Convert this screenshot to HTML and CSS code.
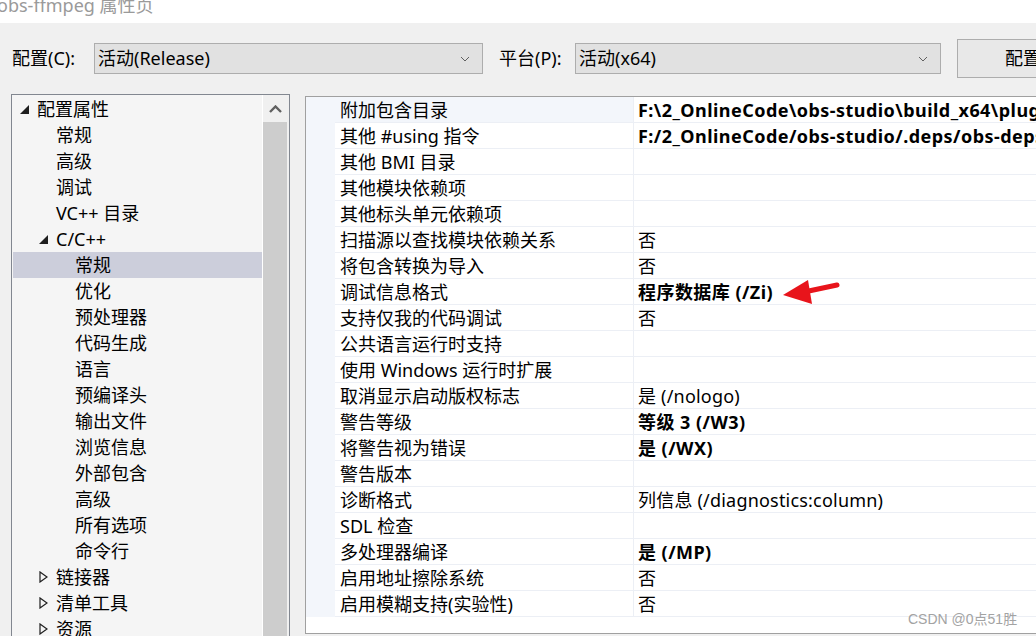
FILE: index.html
```html
<!DOCTYPE html>
<html lang="zh-CN">
<head>
<meta charset="utf-8">
<title>obs-ffmpeg 属性页</title>
<link rel="stylesheet" href="styles.css">
</head>
<body>
<div class="window">
  <div class="title">obs-ffmpeg 属性页</div>
  <div class="toolbar">
    <div class="lbl lbl-config">配置(C):</div>
    <div class="select sel-config"><span>活动(Release)</span><svg class="chev" width="10" height="6" viewBox="0 0 10 6"><polyline points="1,1 5,5 9,1" fill="none" stroke="#606060" stroke-width="1"/></svg></div>
    <div class="lbl lbl-platform">平台(P):</div>
    <div class="select sel-platform"><span>活动(x64)</span><svg class="chev" width="10" height="6" viewBox="0 0 10 6"><polyline points="1,1 5,5 9,1" fill="none" stroke="#606060" stroke-width="1"/></svg></div>
    <div class="btn">配置管理器(O)...</div>
  </div>
  <div class="main">
    <div class="tree">
      <div class="tree-list">
        <div class="node l1"><span class="tri"><svg width="9" height="9" viewBox="0 0 9 9"><polygon points="9,0 9,9 0,9" fill="#1e1e1e"/></svg></span>配置属性</div>
        <div class="node l2">常规</div>
        <div class="node l2">高级</div>
        <div class="node l2">调试</div>
        <div class="node l2">VC++ 目录</div>
        <div class="node l2t"><span class="tri"><svg width="9" height="9" viewBox="0 0 9 9"><polygon points="9,0 9,9 0,9" fill="#1e1e1e"/></svg></span>C/C++</div>
        <div class="node l3 selected">常规</div>
        <div class="node l3">优化</div>
        <div class="node l3">预处理器</div>
        <div class="node l3">代码生成</div>
        <div class="node l3">语言</div>
        <div class="node l3">预编译头</div>
        <div class="node l3">输出文件</div>
        <div class="node l3">浏览信息</div>
        <div class="node l3">外部包含</div>
        <div class="node l3">高级</div>
        <div class="node l3">所有选项</div>
        <div class="node l3">命令行</div>
        <div class="node l2t"><span class="tri"><svg width="9" height="12" viewBox="0 0 9 12"><polygon points="1,1 8,6 1,11" fill="none" stroke="#1e1e1e" stroke-width="1.2"/></svg></span>链接器</div>
        <div class="node l2t"><span class="tri"><svg width="9" height="12" viewBox="0 0 9 12"><polygon points="1,1 8,6 1,11" fill="none" stroke="#1e1e1e" stroke-width="1.2"/></svg></span>清单工具</div>
        <div class="node l2t"><span class="tri"><svg width="9" height="12" viewBox="0 0 9 12"><polygon points="1,1 8,6 1,11" fill="none" stroke="#1e1e1e" stroke-width="1.2"/></svg></span>资源</div>
      </div>
      <div class="vscroll">
        <div class="up"><svg width="13" height="8" viewBox="0 0 13 8"><polyline points="1,7 6.5,1.5 12,7" fill="none" stroke="#606060" stroke-width="2.4"/></svg></div>
        <div class="thumb"></div>
      </div>
    </div>
    <div class="grid">
      <div class="rows">
        <div class="row first"><div class="name">附加包含目录</div><div class="val bold">F:\2_OnlineCode\obs-studio\build_x64\plugins\obs-ffmpeg</div></div>
        <div class="row"><div class="name">其他 #using 指令</div><div class="val bold">F:/2_OnlineCode/obs-studio/.deps/obs-deps-2023</div></div>
        <div class="row"><div class="name">其他 BMI 目录</div><div class="val"></div></div>
        <div class="row"><div class="name">其他模块依赖项</div><div class="val"></div></div>
        <div class="row"><div class="name">其他标头单元依赖项</div><div class="val"></div></div>
        <div class="row"><div class="name">扫描源以查找模块依赖关系</div><div class="val">否</div></div>
        <div class="row"><div class="name">将包含转换为导入</div><div class="val">否</div></div>
        <div class="row"><div class="name">调试信息格式</div><div class="val bold">程序数据库 (/Zi)</div></div>
        <div class="row"><div class="name">支持仅我的代码调试</div><div class="val">否</div></div>
        <div class="row"><div class="name">公共语言运行时支持</div><div class="val"></div></div>
        <div class="row"><div class="name">使用 Windows 运行时扩展</div><div class="val"></div></div>
        <div class="row"><div class="name">取消显示启动版权标志</div><div class="val">是 (/nologo)</div></div>
        <div class="row"><div class="name">警告等级</div><div class="val bold">等级 3 (/W3)</div></div>
        <div class="row"><div class="name">将警告视为错误</div><div class="val bold">是 (/WX)</div></div>
        <div class="row"><div class="name">警告版本</div><div class="val"></div></div>
        <div class="row"><div class="name">诊断格式</div><div class="val">列信息 (/diagnostics:column)</div></div>
        <div class="row"><div class="name">SDL 检查</div><div class="val"></div></div>
        <div class="row"><div class="name">多处理器编译</div><div class="val bold">是 (/MP)</div></div>
        <div class="row"><div class="name">启用地址擦除系统</div><div class="val">否</div></div>
        <div class="row"><div class="name">启用模糊支持(实验性)</div><div class="val">否</div></div>
      </div>
    </div>
  </div>
  <svg class="arrow" width="64" height="32" viewBox="0 0 64 32">
    <line x1="24" y1="16" x2="57" y2="9" stroke="#e8141b" stroke-width="5" stroke-linecap="round"/>
    <polygon points="3,19 28,4 32,28" fill="#e8141b"/>
  </svg>
  <div class="watermark">CSDN @0点51胜</div>
</div>
</body>
</html>
```

FILE: styles.css
```css
html, body {
  margin: 0;
  padding: 0;
}
body {
  width: 1036px;
  height: 636px;
  overflow: hidden;
  background: #f0f0f0;
  font-family: "Noto Sans", "Noto Sans CJK SC", sans-serif;
  font-size: 18px;
  color: #000;
}
.window {
  position: relative;
  width: 1036px;
  height: 636px;
  overflow: hidden;
}
.title {
  height: 23px;
  background: #fff;
  color: #9a9a9a;
  line-height: 10px;
  margin-left: -3px;
  white-space: nowrap;
}
.toolbar {
  display: flex;
  align-items: flex-start;
  padding: 20px 0 0 12px;
  height: 51px;
  white-space: nowrap;
}
.lbl {
  height: 31px;
  line-height: 31px;
  flex: none;
}
.lbl-config { width: 82px; }
.lbl-platform { width: 76px; margin-left: 16px; }
.select {
  box-sizing: border-box;
  height: 31px;
  border: 1px solid #adadad;
  background: #e1e1e1;
  display: flex;
  align-items: center;
  justify-content: space-between;
  padding: 0 12px 0 3px;
  flex: none;
}
.select span { line-height: 29px; }
.sel-config { width: 389px; }
.sel-platform { width: 366px; }
.chev { display: block; }
.btn {
  box-sizing: border-box;
  margin-left: 16px;
  margin-top: -4px;
  height: 39px;
  line-height: 37px;
  border: 1px solid #adadad;
  background: #e8e8e8;
  padding-left: 47px;
  width: 200px;
  flex: none;
}
.main {
  display: flex;
  align-items: flex-start;
  margin: 0 0 0 11px;
}
.tree {
  flex: none;
  display: flex;
  width: 279px;
  height: 560px;
  box-sizing: border-box;
  border: 1px solid #828790;
  background: #f5f5f5;
}
.tree-list {
  width: 250px;
  padding-top: 1px;
  border-right: 1px solid #fff;
  flex: none;
}
.node {
  height: 26px;
  line-height: 26px;
  display: flex;
  align-items: center;
  white-space: nowrap;
}
.tri {
  width: 17px;
  flex: none;
  display: flex;
  align-items: center;
}
.tri svg { display: block; }
.l1 { padding-left: 8px; }
.l2 { padding-left: 44px; }
.l2t { padding-left: 27px; }
.l3 { padding-left: 63px; }
.selected {
  background: #cccedb;
  margin-left: 1px;
  padding-left: 62px;
}
.vscroll {
  flex: 1;
  background: #f0f0f0;
  display: flex;
  flex-direction: column;
}
.up {
  height: 27px;
  display: flex;
  align-items: center;
  justify-content: center;
  padding-right: 2px;
}
.up svg { display: block; }
.thumb {
  width: 24px;
  flex: 1;
  background: #cdcdcd;
}
.grid {
  flex: none;
  margin: 2px 0 0 15px;
  width: 760px;
  height: 538px;
  box-sizing: border-box;
  border: 1px solid #a0a0a0;
  border-right: none;
  background: #fff;
}
.rows {
  background: linear-gradient(to right, #f3f6fb 29px, #fff 29px);
}
.row {
  display: flex;
  height: 26px;
  box-sizing: border-box;
  border-bottom: 1px solid #eceff5;
  margin-left: 29px;
  background: #fff;
  white-space: nowrap;
}
.row .name {
  width: 299px;
  flex: none;
  box-sizing: border-box;
  padding: 1px 0 0 5px;
  border-right: 1px solid #eceff5;
  line-height: 25px;
  overflow: hidden;
}
.row.first .name { background: #f3f6fb; }
.row .val {
  padding: 1px 0 0 4px;
  line-height: 25px;
  letter-spacing: 0.2px;
}
.row .val.bold {
  font-weight: 700;
  letter-spacing: 0.45px;
}
.arrow {
  position: absolute;
  left: 780px;
  top: 276px;
}
.watermark {
  position: absolute;
  left: 908px;
  top: 609px;
  font-size: 14px;
  line-height: 20px;
  color: #a3a3a3;
  font-family: "Liberation Sans", "Noto Sans CJK SC", sans-serif;
}
```
